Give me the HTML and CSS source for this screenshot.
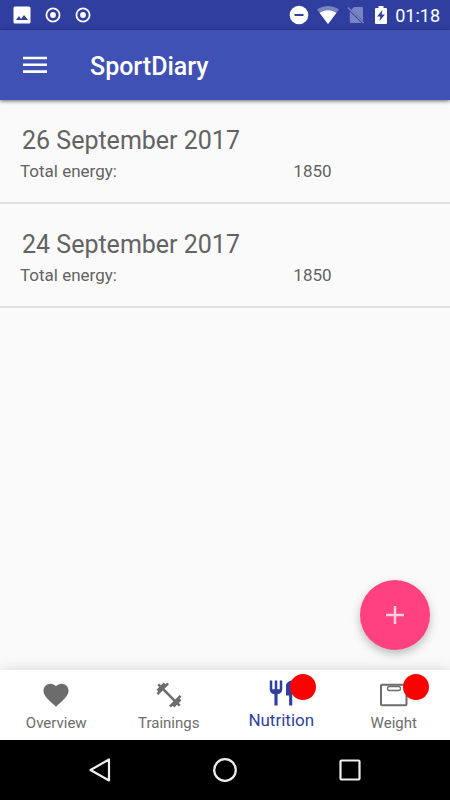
FILE: index.html
```html
<!DOCTYPE html>
<html lang="en">
<head>
<meta charset="utf-8">
<meta name="viewport" content="width=device-width, initial-scale=1">
<title>SportDiary</title>
<link rel="stylesheet" href="styles.css">
</head>
<body>
<div class="status">
  <div class="status-left">
    <svg width="18" height="18" viewBox="0 0 18 18"><path fill="#fff" fill-rule="evenodd" d="M2 0.500h14a1.500 1.500 0 0 1 1.500 1.500v14a1.500 1.500 0 0 1-1.500 1.500h-14a1.500 1.500 0 0 1-1.500-1.500v-14a1.500 1.500 0 0 1 1.500-1.500zM3 14h12l-4-5-3 4-2-3z"/></svg>
    <svg width="16" height="16" viewBox="0 0 16 16"><circle cx="8" cy="8" r="6.600" fill="none" stroke="#fff" stroke-width="1.800"/><circle cx="8" cy="8" r="2.900" fill="#fff"/></svg>
    <svg width="16" height="16" viewBox="0 0 16 16"><circle cx="8" cy="8" r="6.600" fill="none" stroke="#fff" stroke-width="1.800"/><circle cx="8" cy="8" r="2.900" fill="#fff"/></svg>
  </div>
  <div class="status-right">
    <svg width="20" height="20" viewBox="0 0 20 20"><circle cx="10" cy="10" r="9.300" fill="#fff"/><path stroke="#303f9f" stroke-width="2" d="M5.500 10h9"/></svg>
    <svg width="22" height="20" viewBox="0 0 22 20"><path fill="#7a84c2" d="M0 4.500C6.500-.2 15.500-.2 22 4.500L11 19z"/><path fill="#fff" d="M2.700 8C7.500 4.200 14.500 4.200 19.300 8L11 19z"/></svg>
    <svg width="18" height="20" viewBox="0 0 18 20"><path fill="#7a84c2" d="M7 2h8a1 1 0 0 1 1 1v13L4.300 4.700zM2.800 6.500 14.500 18H4a1.200 1.200 0 0 1-1.200-1.200z"/><path stroke="#7a84c2" stroke-width="1.500" d="M1 2.500 16.500 18"/></svg>
    <svg class="battery" width="12" height="20" viewBox="0 0 12 20"><path fill="#fff" d="M3.500 1h5v2H11a1 1 0 0 1 1 1v14a1 1 0 0 1-1 1H1a1 1 0 0 1-1-1V4a1 1 0 0 1 1-1h2.500z"/><path fill="#303f9f" d="M7.500 5 2 11.500h3.300L4.500 16 10 9.500H6.700z"/></svg>
    <span>01:18</span>
  </div>
</div>
<header class="toolbar">
  <button class="menu" aria-label="Open menu"><svg width="24" height="18" viewBox="0 0 24 18"><path stroke="#fff" stroke-width="2.600" d="M0 2h24M0 8.800h24M0 15.600h24"/></svg></button>
  <h1>SportDiary</h1>
</header>
<main>
  <article class="entry">
    <h2>26 September 2017</h2>
    <div class="energy"><span>Total energy:</span><span>1850</span></div>
  </article>
  <article class="entry">
    <h2>24 September 2017</h2>
    <div class="energy"><span>Total energy:</span><span>1850</span></div>
  </article>
  <button class="add" aria-label="Add entry"><svg width="18" height="18" viewBox="0 0 18 18"><path stroke="#ffd0df" stroke-width="2.500" d="M0 9h18M9 0v18"/></svg></button>
</main>
<nav class="tabs">
  <a href="#overview"><svg width="30" height="30" viewBox="0 0 24 24"><path d="M12 21.350l-1.450-1.320C5.400 15.360 2 12.280 2 8.500 2 5.420 4.420 3 7.500 3c1.740 0 3.410.81 4.500 2.090C13.090 3.810 14.760 3 16.500 3 19.580 3 22 5.420 22 8.500c0 3.780-3.400 6.860-8.550 11.540z"/></svg><span>Overview</span></a>
  <a href="#trainings"><svg width="30" height="30" viewBox="0 0 24 24"><path d="M20.570 14.860 22 13.430 20.570 12 17 15.570 8.430 7 12 3.430 10.570 2 9.140 3.430 7.710 2 5.570 4.140 4.140 2.710 2.710 4.140 4.140 5.570 2 7.710 3.430 9.140 2 10.570 3.430 12 7 8.430 15.570 17 12 20.570 13.430 22 14.860 20.570 16.290 22 18.430 19.860 19.860 21.290 21.290 19.860 19.860 18.430 22 16.290z"/></svg><span>Trainings</span></a>
  <a class="active badged" href="#nutrition" aria-current="page"><svg width="30" height="30" viewBox="0 0 24 24"><path d="M11 9H9V2H7v7H5V2H3v7c0 2.120 1.660 3.840 3.750 3.970V22h2.500v-9.030C11.340 12.840 13 11.120 13 9V2h-2zm5-3v8h2.500v8H21V2c-2.760 0-5 2.240-5 4z"/></svg><span>Nutrition</span></a>
  <a class="badged" href="#weight"><svg width="30" height="30" viewBox="0 0 30 30"><rect x="2" y="4.800" width="25.500" height="20.400" rx="1" fill="none" stroke="currentColor" stroke-width="2"/><rect x="8.500" y="6.500" width="13" height="4" rx="2" fill="none" stroke="currentColor" stroke-width="1.300"/></svg><span>Weight</span></a>
</nav>
<footer class="system">
  <button aria-label="Back"><svg width="24" height="24" viewBox="0 0 24 24"><path d="M21 1.500v21L2.500 12z"/></svg></button>
  <button aria-label="Home"><svg width="24" height="24" viewBox="0 0 24 24"><circle cx="12" cy="12" r="10.800"/></svg></button>
  <button aria-label="Recent apps"><svg width="24" height="24" viewBox="0 0 24 24"><rect x="2.500" y="2.500" width="19" height="19" rx="1"/></svg></button>
</footer>
</body>
</html>
```
FILE: styles.css
```css
* { box-sizing: border-box; }
body {
  margin: 0;
  min-height: 100vh;
  display: flex;
  flex-direction: column;
  background: #fafafa;
  color: #636363;
  font-family: Roboto, sans-serif;
}
svg { display: block; }
button { border: 0; padding: 0; background: none; cursor: pointer; }
h1, h2 { margin: 0; }

.status {
  height: 30px;
  padding: 0 10px 0 13px;
  display: flex;
  align-items: center;
  justify-content: space-between;
  background: #303f9f;
  color: #fff;
  font-size: 18px;
}
.status-left { display: flex; align-items: center; gap: 14px; }
.status-right { display: flex; align-items: center; gap: 8px; }
.battery { margin: 0 0 0 2px; }

.toolbar {
  position: relative;
  height: 70px;
  padding: 2px 20px 0;
  display: flex;
  align-items: center;
  gap: 40px;
  background: #3f51b5;
  color: #fff;
  box-shadow: 0 1px 4px rgba(0, 0, 0, 0.6);
}
.menu { width: 30px; height: 42px; padding-bottom: 2px; display: grid; place-items: center; }
.toolbar h1 { font-size: 25px; font-weight: 500; }

main { position: relative; flex: 1; }
.entry {
  padding: 24px 20px 18px;
  border-bottom: 2px solid #e1e1e1;
}
.entry h2 {
  padding-left: 2px;
  font-size: 25px;
  line-height: 34px;
  font-weight: 400;
}
.energy {
  display: grid;
  grid-template-columns: 2fr 1fr;
  font-size: 17px;
  line-height: 26px;
}
.add {
  position: absolute;
  right: 20px;
  bottom: 20px;
  width: 70px;
  height: 70px;
  display: grid;
  place-items: center;
  border-radius: 50%;
  background: #ff4081;
  box-shadow: 0 4px 10px rgba(0, 0, 0, 0.25);
}

.tabs {
  position: relative;
  height: 70px;
  display: flex;
  background: #fff;
  box-shadow: 0 -1px 12px rgba(0, 0, 0, 0.13);
}
.tabs a {
  position: relative;
  flex: 1;
  padding-top: 10px;
  display: flex;
  flex-direction: column;
  align-items: center;
  gap: 3px;
  color: #6c6c6c;
  fill: currentColor;
  font-size: 15px;
  line-height: 20px;
  text-decoration: none;
}
.tabs .active { padding-top: 8px; gap: 2px; color: #303f9f; font-size: 17px; }
.badged::after {
  content: "";
  position: absolute;
  top: 4px;
  left: calc(50% + 9px);
  width: 26px;
  height: 26px;
  border-radius: 50%;
  background: #f00;
}

.system {
  position: relative;
  height: 60px;
  padding: 0 38px;
  display: flex;
  background: #000;
}
.system button { flex: 1; display: grid; place-items: center; }
.system svg { fill: none; stroke: #eee; stroke-width: 2.2; stroke-linejoin: round; }
```
